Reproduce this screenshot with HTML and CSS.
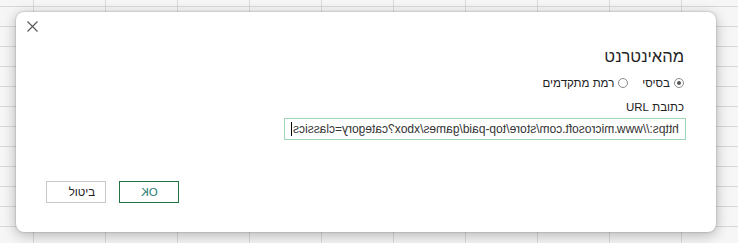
FILE: index.html
```html
<!DOCTYPE html>
<html lang="he">
<head>
<meta charset="utf-8">
<link rel="stylesheet" href="styles.css">
</head>
<body>
<div class="dialog" dir="rtl">
  <button class="close" aria-label="סגור">
    <svg width="11" height="11" viewBox="0 0 11 11"><path d="M0.5 0.5 L10.5 10.5 M10.5 0.5 L0.5 10.5" stroke="#555" stroke-width="1.1" fill="none"/></svg>
  </button>
  <div class="content">
    <h1 class="title">מהאינטרנט</h1>
    <div class="radios">
      <label class="radio"><span class="dot checked"></span><span>בסיסי</span></label>
      <label class="radio"><span class="dot"></span><span>רמת מתקדמים</span></label>
    </div>
    <div class="field-label">כתובת URL</div>
    <div class="input"><span class="input-text">https://www.microsoft.com/store/top-paid/games/xbox?category=classics</span><span class="caret"></span></div>
  </div>
  <div class="actions">
    <button class="btn ok"><span class="mirror">OK</span></button>
    <button class="btn cancel">ביטול</button>
  </div>
</div>
</body>
</html>
```
FILE: styles.css
```css
html, body {
  margin: 0;
  height: 100%;
}
body {
  width: 738px;
  height: 243px;
  overflow: hidden;
  box-sizing: border-box;
  padding: 12px 0 0 16px;
  background-color: #f6f6f6;
  background-image:
    linear-gradient(to right, #d9d9d9 1px, transparent 1px),
    linear-gradient(to bottom, #d9d9d9 1px, transparent 1px);
  background-size: 72px 20px, 72px 20px;
  background-position: 33px 0, 0 6px;
  font-family: "Liberation Sans", Arial, sans-serif;
}
.dialog {
  position: relative;
  width: 700px;
  height: 220px;
  box-sizing: border-box;
  background: #fff;
  border-radius: 8px;
  box-shadow: 0 3px 14px rgba(0,0,0,0.28), 0 0 2px rgba(0,0,0,0.3);
  display: flex;
  flex-direction: column;
  justify-content: space-between;
  padding: 0 32px 29px 30px;
}
.close {
  position: absolute;
  left: 11px;
  top: 9px;
  width: 11px;
  height: 11px;
  padding: 0;
  border: 0;
  background: none;
  line-height: 0;
}
.content {
  display: flex;
  flex-direction: column;
  align-items: flex-start;
  padding-top: 34px;
}
.title {
  margin: 0;
  font-size: 16.5px;
  font-weight: normal;
  line-height: 20px;
  color: #1f1f1f;
}
.radios {
  display: flex;
  gap: 14px;
  margin-top: 9px;
  font-size: 11.5px;
  line-height: 16px;
  color: #222;
}
.radio {
  display: flex;
  align-items: center;
  gap: 4px;
}
.dot {
  width: 8px;
  height: 8px;
  border: 1px solid #8a8a8a;
  border-radius: 50%;
  box-sizing: content-box;
  background: #fff;
  position: relative;
}
.dot.checked::after {
  content: "";
  position: absolute;
  left: 2px;
  top: 2px;
  width: 4px;
  height: 4px;
  border-radius: 50%;
  background: #555;
}
.field-label {
  margin-top: 8px;
  font-size: 11.5px;
  line-height: 16px;
  color: #222;
}
.input {
  margin-top: 3px;
  margin-right: -2px;
  width: 402px;
  height: 22px;
  box-sizing: border-box;
  border: 1px solid #9fd6b8;
  display: flex;
  align-items: center;
  padding: 0 6px 0 0;
  font-size: 12px;
  color: #333;
}
.input-text {
  display: inline-block;
  transform: scaleX(-1);
  white-space: nowrap;
  direction: ltr;
}
.caret {
  width: 1px;
  height: 14px;
  background: #000;
  margin-right: 1px;
}
.actions {
  display: flex;
  gap: 13px;
  justify-content: flex-end;
}
.btn {
  width: 60px;
  height: 22px;
  box-sizing: border-box;
  background: #fff;
  font-family: "Liberation Sans", Arial, sans-serif;
  font-size: 11.5px;
  padding: 0;
}
.ok {
  border: 1px solid #217346;
  color: #1f7a6e;
}
.cancel {
  border: 1px solid #c8c8c8;
  color: #222;
  padding-left: 12px;
}
.mirror {
  display: inline-block;
  transform: scaleX(-1);
}
```
